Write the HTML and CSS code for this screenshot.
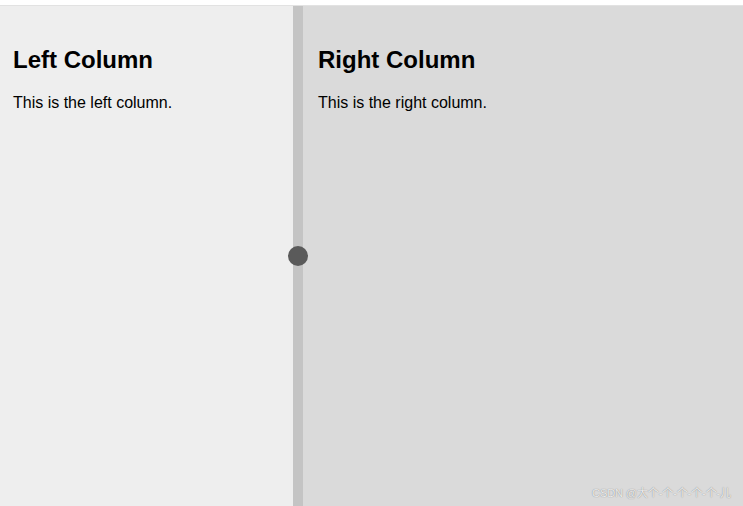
FILE: index.html
```html
<!DOCTYPE html>
<html lang="en">
<head>
  <meta charset="UTF-8" />
  <title>Resizable Columns</title>
  <link rel="stylesheet" href="styles.css">
</head>
<body>

  <div class="container">
    <div class="column left">
      <h2>Left Column</h2>
      <p>This is the left column.</p>
    </div>

    <div class="resizer">
      <span class="handle"></span>
    </div>

    <div class="column right">
      <h2>Right Column</h2>
      <p>This is the right column.</p>
    </div>

    <span class="watermark">CSDN @大个-个-个-个-个-儿</span>
  </div>

</body>
</html>
```

FILE: styles.css
```css
body {
  margin: 0;
  padding-top: 5px;
  background-color: white;
  font-family: "Liberation Sans", Arial, "Noto Sans CJK SC", sans-serif;
  color: black;
}

.container {
  position: relative;
  display: flex;
  height: 500px;
  border-top: 1px solid #e2e2e2;
}

.column {
  padding: 20px 13px;
  box-sizing: border-box;
}

.column h2 {
  font-size: 24px;
  margin: 20px 0;
}

.column p {
  font-size: 16px;
  margin: 16px 0;
}

.left {
  width: 293px;
  background-color: #eeeeee;
}

.right {
  flex: 1;
  padding-left: 15px;
  background-color: #dadada;
}

.resizer {
  position: relative;
  width: 10px;
  background-color: #c4c4c4;
}

.handle {
  position: absolute;
  top: 240px;
  left: -5px;
  width: 20px;
  height: 20px;
  border-radius: 50%;
  background-color: #5a5a5a;
}

.watermark {
  position: absolute;
  right: 12px;
  bottom: 6px;
  font-size: 11px;
  letter-spacing: -0.1px;
  color: rgba(255, 255, 255, 0.85);
  text-shadow: 0 0 1px rgba(0, 0, 0, 0.5);
}
```
